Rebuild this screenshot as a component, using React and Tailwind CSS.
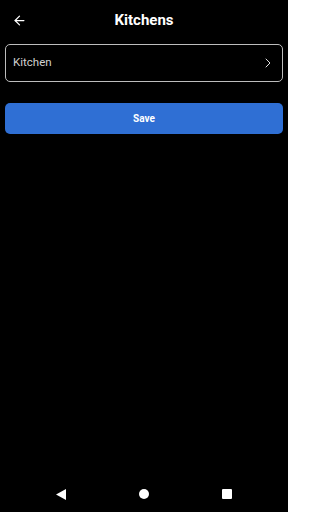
import { ArrowLeft, ChevronRight } from "lucide-react";

export default function App() {
  return (
    <div className="w-[288px] h-[512px] bg-black flex flex-col font-['Roboto',sans-serif]">
      <div className="h-[40px] flex items-center px-[12px] relative shrink-0">
        <ArrowLeft className="w-[15px] h-[15px] text-white" strokeWidth={2} />
        <h1 className="absolute left-0 right-0 text-center text-white text-[15px] font-bold pointer-events-none">Kitchens</h1>
      </div>
      <div className="px-[5px] pt-[4px]">
        <button className="w-full h-[38px] border border-[#bdbdbd] rounded-[5px] flex items-center justify-between pl-[7px] pr-[6px]">
          <span className="text-[11.5px] text-[#d0d0d0]">Kitchen</span>
          <ChevronRight className="w-[16px] h-[16px] text-[#e0e0e0]" strokeWidth={1.5} />
        </button>
        <button className="mt-[21px] w-full h-[31px] bg-[#2f6fd4] rounded-[5px] text-white text-[10px] font-bold">Save</button>
      </div>
      <div className="flex-1" />
      <div className="h-[36px] flex items-center justify-center gap-[73px] shrink-0">
        <svg width="10" height="11" viewBox="0 0 10 11"><path d="M10 0 L10 11 L0 5.5 Z" fill="white" /></svg>
        <div className="w-[10px] h-[10px] rounded-full bg-white" />
        <div className="w-[10px] h-[10px] rounded-[1px] bg-white" />
      </div>
    </div>
  );
}
